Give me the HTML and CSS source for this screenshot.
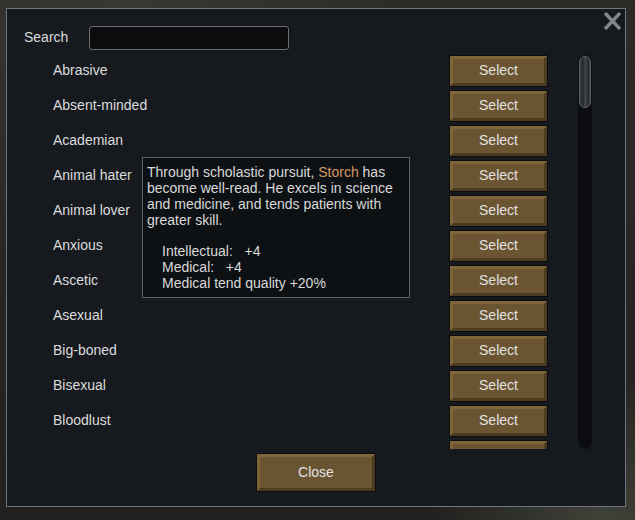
FILE: index.html
```html
<!DOCTYPE html>
<html lang="en">

<head>
    <meta charset="UTF-8">
    <meta name="viewport" content="width=device-width, initial-scale=1.0">
    <title>Select trait</title>
    <link rel="stylesheet" href="styles.css">
</head>

<body>
    <div class="dialog">
        <button class="dialog-x" title="Close">
            <svg width="19" height="18" viewBox="0 0 19 18">
                <path d="M2 1 L17 17 M17 1 L2 17" stroke="#82878c" stroke-width="3.4" fill="none" />
            </svg>
        </button>

        <div class="search-row">
            <label for="search">Search</label>
            <input type="text" id="search">
        </div>

        <div class="trait-area">
            <div class="trait-list">
                <div class="trait-row"><span>Abrasive</span><button class="btn">Select</button></div>
                <div class="trait-row"><span>Absent-minded</span><button class="btn">Select</button></div>
                <div class="trait-row"><span>Academian</span><button class="btn">Select</button></div>
                <div class="trait-row"><span>Animal hater</span><button class="btn">Select</button></div>
                <div class="trait-row"><span>Animal lover</span><button class="btn">Select</button></div>
                <div class="trait-row"><span>Anxious</span><button class="btn">Select</button></div>
                <div class="trait-row"><span>Ascetic</span><button class="btn">Select</button></div>
                <div class="trait-row"><span>Asexual</span><button class="btn">Select</button></div>
                <div class="trait-row"><span>Big-boned</span><button class="btn">Select</button></div>
                <div class="trait-row"><span>Bisexual</span><button class="btn">Select</button></div>
                <div class="trait-row"><span>Bloodlust</span><button class="btn">Select</button></div>
                <!-- next row is scrolled past the bottom edge -->
                <div class="trait-row"><span></span><button class="btn"></button></div>
            </div>
            <div class="scrollbar">
                <div class="scroll-thumb"></div>
            </div>
        </div>

        <div class="footer">
            <button class="btn btn-close">Close</button>
        </div>

        <div class="tooltip">
            <p>Through scholastic pursuit, <span class="pawn-name">Storch</span> has<br>become well-read. He excels in science<br>and medicine, and tends patients with<br>greater skill.</p>
            <p class="stats">Intellectual:   +4
Medical:   +4
Medical tend quality +20%</p>
        </div>
    </div>
</body>

</html>
```

FILE: styles.css
```css
* {
    margin: 0;
    padding: 0;
    box-sizing: border-box;
}

body,
html {
    width: 100%;
    height: 100%;
}

body {
    padding: 8px 0 0 6px;
    overflow: hidden;
    background-color: #252421;
    background-image:
        radial-gradient(ellipse at 95% 100%, rgba(120, 125, 100, 0.35), transparent 20%),
        radial-gradient(ellipse at 20% 0%, rgba(70, 68, 62, 0.5), transparent 40%),
        linear-gradient(180deg, #2c2b28, #222120);
    font-family: "Liberation Sans", Arial, sans-serif;
    font-size: 14px;
    color: #dcdcdc;
}

.dialog {
    position: relative;
    width: 620px;
    height: 499px;
    border: 1px solid #6b7785;
    background-color: #161a1f;
}

.dialog-x {
    position: absolute;
    top: 3px;
    right: 3px;
    width: 19px;
    height: 18px;
    border: none;
    background: none;
    cursor: pointer;
}

.dialog-x svg {
    display: block;
}

/* search field */

.search-row {
    display: flex;
    align-items: center;
    height: 24px;
    margin-top: 17px;
    padding-left: 17px;
}

.search-row label {
    width: 65px;
    margin-top: -2px;
}

.search-row input {
    width: 200px;
    height: 24px;
    border: 1px solid #6e6e6e;
    border-radius: 3px;
    background-color: #0b0c0e;
    color: #dcdcdc;
    font-family: inherit;
    font-size: 14px;
    padding: 0 4px;
}

/* list of traits */

.trait-area {
    display: flex;
    height: 394px;
    margin-top: 5px;
}

.trait-list {
    width: 541px;
    height: 100%;
    overflow: hidden;
    padding-left: 46px;
}

.trait-row {
    display: flex;
    justify-content: space-between;
    align-items: center;
    height: 32px;
    margin-bottom: 3px;
    line-height: 16px;
}

.trait-row span {
    margin-top: -2px;
}

.btn {
    width: 97px;
    height: 30px;
    margin-right: 1px;
    border: 3px solid;
    border-color: #7f663a #4b3b1f #4b3b1f #7f663a;
    box-shadow: 0 0 0 1px #0c0c0c;
    background-color: #6a5431;
    color: #e2e2e2;
    font-family: inherit;
    font-size: 14px;
    line-height: 16px;
    padding-bottom: 2px;
    cursor: pointer;
}

.scrollbar {
    width: 14px;
    height: 100%;
    margin-left: 30px;
    padding: 1px;
    border-radius: 7px;
    background-color: #0b0d10;
}

.scroll-thumb {
    height: 52px;
    border: 1px solid #5f6266;
    border-radius: 6px;
    background: linear-gradient(90deg, #3a3d40, #25282b 30%, #45484b 55%, #25282b 80%, #3a3d40);
}

/* bottom button */

.footer {
    display: flex;
    justify-content: center;
    margin-top: 4px;
}

.btn-close {
    width: 118px;
    height: 37px;
    margin: 1px 0 0;
}

/* hover description */

.tooltip {
    position: absolute;
    left: 135px;
    top: 148px;
    width: 268px;
    height: 141px;
    padding: 6px 4px;
    border: 1px solid #58616c;
    background-color: #0e1114;
    line-height: 16px;
    color: #d8d8d8;
    white-space: nowrap;
}

.tooltip p {
    margin-bottom: 15px;
}

.tooltip .stats {
    margin-bottom: 0;
    padding-left: 15px;
    white-space: pre;
}

.pawn-name {
    color: #d29a5d;
}
```
